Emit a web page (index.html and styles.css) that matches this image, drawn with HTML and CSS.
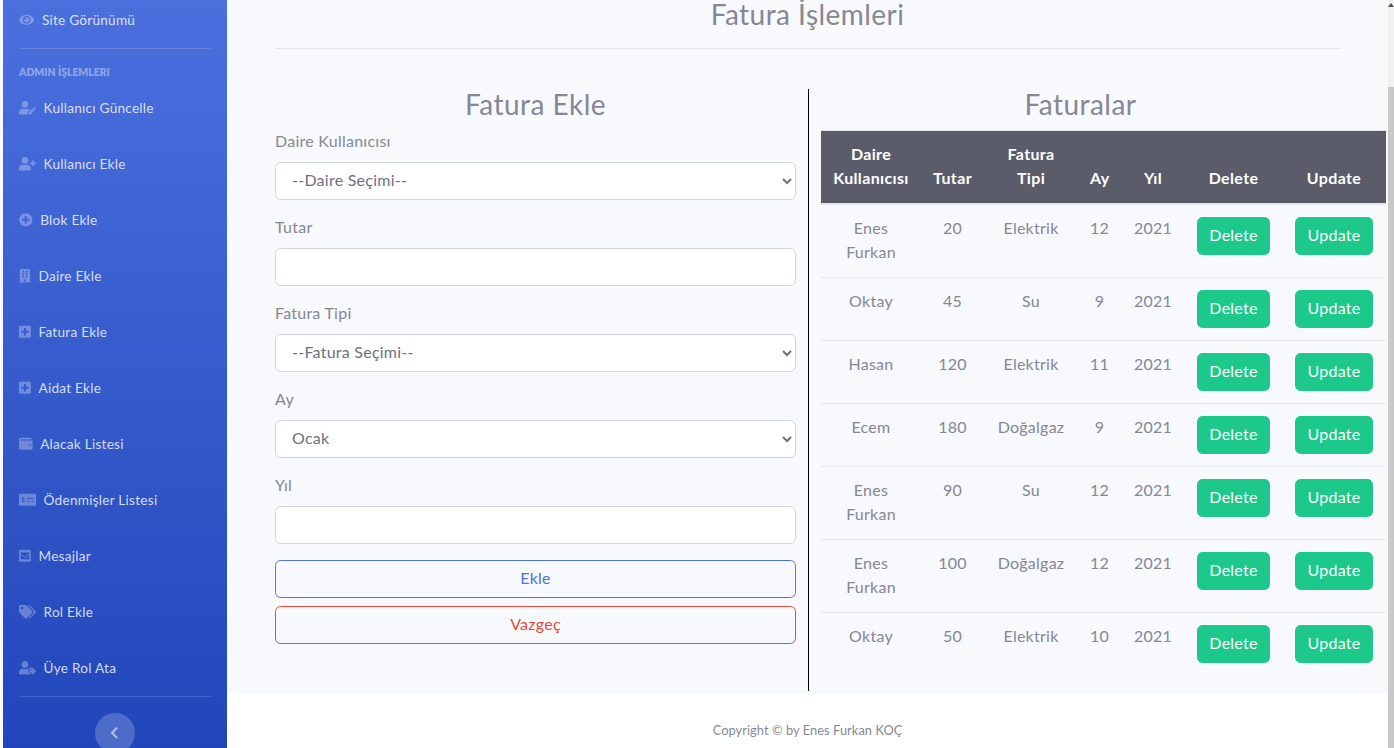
FILE: index.html
```html
<!DOCTYPE html>
<html lang="tr">
<head>
    <meta charset="UTF-8">
    <meta name="viewport" content="width=device-width, initial-scale=1.0">
    <title>Fatura İşlemleri</title>
    <link rel="stylesheet" href="styles.css">
</head>
<body>
    <div class="edge"></div>
    <nav class="sidebar">
        <a class="nav-top" href="#">
            <svg class="icon" viewBox="0 0 576 512"><path d="M572.52 241.4C518.29 135.59 410.93 64 288 64S57.68 135.64 3.48 241.41a32.35 32.35 0 0 0 0 29.19C57.71 376.41 165.07 448 288 448s230.32-71.64 284.52-177.41a32.35 32.35 0 0 0 0-29.19zM288 400a144 144 0 1 1 144-144 143.93 143.93 0 0 1-144 144zm0-240a95.31 95.31 0 0 0-25.31 3.79 47.85 47.85 0 0 1-66.9 66.9A95.78 95.78 0 1 0 288 160z"/></svg>
            <span>Site Görünümü</span>
        </a>
        <div class="side-divider"></div>
        <div class="side-heading">ADMIN İŞLEMLERI</div>
        <a class="nav-item" href="#">
            <svg class="icon" viewBox="0 0 640 512"><path d="M224 256c70.7 0 128-57.3 128-128S294.7 0 224 0 96 57.3 96 128s57.3 128 128 128zm89.6 32h-16.7c-22.2 10.2-46.9 16-72.9 16s-50.6-5.8-72.9-16h-16.7C60.2 288 0 348.2 0 422.4V464c0 26.5 21.5 48 48 48h274.9c-2.4-6.8-3.4-14-2.6-21.3l6.8-60.9 1.2-11.1 7.9-7.9 77.3-77.3c-24.5-27.7-60-45.5-99.9-45.5zm45.3 145.3l-6.8 61c-1.1 10.2 7.5 18.8 17.6 17.6l60.9-6.8 137.9-137.9-71.7-71.7-138 137.8zM633 268.9L595.1 231c-9.3-9.3-24.5-9.3-33.8 0l-37.8 37.8-4.1 4.1 71.8 71.7 41.8-41.8c9.3-9.4 9.3-24.5 0-33.9z"/></svg>
            <span>Kullanıcı Güncelle</span>
        </a>
        <a class="nav-item" href="#">
            <svg class="icon" viewBox="0 0 640 512"><path d="M624 208h-64v-64c0-8.8-7.2-16-16-16h-32c-8.8 0-16 7.2-16 16v64h-64c-8.8 0-16 7.2-16 16v32c0 8.8 7.2 16 16 16h64v64c0 8.8 7.2 16 16 16h32c8.8 0 16-7.2 16-16v-64h64c8.8 0 16-7.2 16-16v-32c0-8.8-7.2-16-16-16zm-400 48c70.7 0 128-57.3 128-128S294.7 0 224 0 96 57.3 96 128s57.3 128 128 128zm89.6 32h-16.7c-22.2 10.2-46.9 16-72.9 16s-50.6-5.8-72.9-16h-16.7C60.2 288 0 348.2 0 422.4V464c0 26.5 21.5 48 48 48h352c26.5 0 48-21.5 48-48v-41.6c0-74.2-60.2-134.4-134.4-134.4z"/></svg>
            <span>Kullanıcı Ekle</span>
        </a>
        <a class="nav-item" href="#">
            <svg class="icon" viewBox="0 0 512 512"><path d="M256 8C119 8 8 119 8 256s111 248 248 248 248-111 248-248S393 8 256 8zm144 276c0 6.6-5.4 12-12 12h-92v92c0 6.6-5.4 12-12 12h-56c-6.6 0-12-5.4-12-12v-92h-92c-6.6 0-12-5.4-12-12v-56c0-6.6 5.4-12 12-12h92v-92c0-6.6 5.4-12 12-12h56c6.6 0 12 5.4 12 12v92h92c6.6 0 12 5.4 12 12v56z"/></svg>
            <span>Blok Ekle</span>
        </a>
        <a class="nav-item" href="#">
            <svg class="icon" viewBox="0 0 448 512"><path d="M436 480h-20V24c0-13.3-10.7-24-24-24H56C42.7 0 32 10.7 32 24v456H12c-6.6 0-12 5.4-12 12v20h448v-20c0-6.6-5.4-12-12-12zM128 76c0-6.6 5.4-12 12-12h40c6.6 0 12 5.4 12 12v40c0 6.6-5.4 12-12 12h-40c-6.6 0-12-5.4-12-12V76zm0 96c0-6.6 5.4-12 12-12h40c6.6 0 12 5.4 12 12v40c0 6.6-5.4 12-12 12h-40c-6.6 0-12-5.4-12-12v-40zm52 148h-40c-6.6 0-12-5.4-12-12v-40c0-6.6 5.4-12 12-12h40c6.6 0 12 5.4 12 12v40c0 6.6-5.4 12-12 12zm76 160h-64v-84c0-6.6 5.4-12 12-12h40c6.6 0 12 5.4 12 12v84zm64-172c0 6.6-5.4 12-12 12h-40c-6.6 0-12-5.4-12-12v-40c0-6.6 5.4-12 12-12h40c6.6 0 12 5.4 12 12v40zm0-96c0 6.6-5.4 12-12 12h-40c-6.6 0-12-5.4-12-12v-40c0-6.6 5.4-12 12-12h40c6.6 0 12 5.4 12 12v40zm0-96c0 6.6-5.4 12-12 12h-40c-6.6 0-12-5.4-12-12V76c0-6.6 5.4-12 12-12h40c6.6 0 12 5.4 12 12v40z"/></svg>
            <span>Daire Ekle</span>
        </a>
        <a class="nav-item" href="#">
            <svg class="icon" viewBox="0 0 448 512"><path d="M400 32H48C21.5 32 0 53.5 0 80v352c0 26.5 21.5 48 48 48h352c26.5 0 48-21.5 48-48V80c0-26.5-21.5-48-48-48zm-32 252c0 6.6-5.4 12-12 12h-92v92c0 6.6-5.4 12-12 12h-56c-6.6 0-12-5.4-12-12v-92H92c-6.6 0-12-5.4-12-12v-56c0-6.6 5.4-12 12-12h92v-92c0-6.6 5.4-12 12-12h56c6.6 0 12 5.4 12 12v92h92c6.6 0 12 5.4 12 12v56z"/></svg>
            <span>Fatura Ekle</span>
        </a>
        <a class="nav-item" href="#">
            <svg class="icon" viewBox="0 0 448 512"><path d="M400 32H48C21.5 32 0 53.5 0 80v352c0 26.5 21.5 48 48 48h352c26.5 0 48-21.5 48-48V80c0-26.5-21.5-48-48-48zm-32 252c0 6.6-5.4 12-12 12h-92v92c0 6.6-5.4 12-12 12h-56c-6.6 0-12-5.4-12-12v-92H92c-6.6 0-12-5.4-12-12v-56c0-6.6 5.4-12 12-12h92v-92c0-6.6 5.4-12 12-12h56c6.6 0 12 5.4 12 12v92h92c6.6 0 12 5.4 12 12v56z"/></svg>
            <span>Aidat Ekle</span>
        </a>
        <a class="nav-item" href="#">
            <svg class="icon" viewBox="0 0 512 512"><path d="M461.2 128H80c-8.84 0-16-7.16-16-16s7.16-16 16-16h384c8.84 0 16-7.16 16-16 0-26.51-21.49-48-48-48H64C28.65 32 0 60.65 0 96v320c0 35.35 28.65 64 64 64h397.2c28.02 0 50.8-21.53 50.8-48V176c0-26.47-22.78-48-50.8-48zM416 336c-17.67 0-32-14.33-32-32s14.33-32 32-32 32 14.33 32 32-14.33 32-32 32z"/></svg>
            <span>Alacak Listesi</span>
        </a>
        <a class="nav-item" href="#">
            <svg class="icon" viewBox="0 0 640 512"><path d="M608 32H32C14.33 32 0 46.33 0 64v384c0 17.67 14.33 32 32 32h576c17.67 0 32-14.33 32-32V64c0-17.67-14.33-32-32-32zM176 327.88V344c0 4.42-3.58 8-8 8h-16c-4.42 0-8-3.58-8-8v-16.29c-11.29-.58-22.27-4.52-31.37-11.35-3.9-2.93-4.1-8.77-.57-12.14l11.75-11.21c2.77-2.64 6.89-2.76 10.13-.73 3.87 2.42 8.26 3.72 12.82 3.72h28.11c6.5 0 11.8-5.92 11.8-13.19 0-5.95-3.61-11.19-8.77-12.73l-45-13.5c-18.59-5.58-31.58-23.42-31.58-43.39 0-24.52 19.05-44.44 42.67-45.07V152c0-4.42 3.58-8 8-8h16c4.42 0 8 3.58 8 8v16.29c11.29.58 22.27 4.51 31.37 11.35 3.9 2.93 4.1 8.77.57 12.14l-11.75 11.21c-2.77 2.64-6.89 2.76-10.13.73-3.87-2.43-8.26-3.72-12.82-3.72h-28.11c-6.5 0-11.8 5.92-11.8 13.19 0 5.95 3.61 11.19 8.77 12.73l45 13.5c18.59 5.58 31.58 23.42 31.58 43.39 0 24.53-19.05 44.44-42.67 45.07zM416 312c0 4.42-3.58 8-8 8H296c-4.42 0-8-3.58-8-8v-16c0-4.42 3.58-8 8-8h112c4.42 0 8 3.58 8 8v16zm160 0c0 4.42-3.58 8-8 8h-80c-4.42 0-8-3.58-8-8v-16c0-4.42 3.58-8 8-8h80c4.42 0 8 3.58 8 8v16zm0-96c0 4.42-3.58 8-8 8H296c-4.42 0-8-3.58-8-8v-16c0-4.42 3.58-8 8-8h272c4.42 0 8 3.58 8 8v16z"/></svg>
            <span>Ödenmişler Listesi</span>
        </a>
        <a class="nav-item" href="#">
            <svg class="icon" viewBox="0 0 448 512"><path d="M400 32H48C21.49 32 0 53.49 0 80v352c0 26.51 21.49 48 48 48h352c26.51 0 48-21.49 48-48V80c0-26.51-21.49-48-48-48zM178.117 262.104C87.429 196.287 88.353 196.121 64 177.167V152c0-13.255 10.745-24 24-24h272c13.255 0 24 10.745 24 24v25.167c-24.371 18.969-23.434 19.124-114.117 84.938-10.5 7.655-31.392 26.12-45.883 25.894-14.503.218-35.367-18.227-45.883-25.895zM384 217.775V360c0 13.255-10.745 24-24 24H88c-13.255 0-24-10.745-24-24V217.775c13.958 10.794 33.329 25.236 95.303 70.214 14.162 10.341 37.975 32.145 64.694 32.01 26.887.134 51.037-22.041 64.72-32.025 61.958-44.965 81.325-59.406 95.283-70.199z"/></svg>
            <span>Mesajlar</span>
        </a>
        <a class="nav-item" href="#">
            <svg class="icon" viewBox="0 0 640 512"><path d="M497.941 225.941L286.059 14.059A48 48 0 0 0 252.118 0H48C21.49 0 0 21.49 0 48v204.118a48 48 0 0 0 14.059 33.941l211.882 211.882c18.744 18.745 49.136 18.746 67.882 0l204.118-204.118c18.745-18.745 18.745-49.137 0-67.882zM112 160c-26.51 0-48-21.49-48-48s21.49-48 48-48 48 21.49 48 48-21.49 48-48 48zm513.941 133.823L421.823 497.941c-18.745 18.745-49.137 18.745-67.882 0l-.36-.36L527.64 323.522c16.999-16.999 26.36-39.6 26.36-63.64s-9.362-46.641-26.36-63.64L331.397 0h48.721a48 48 0 0 1 33.941 14.059l211.882 211.882c18.745 18.745 18.745 49.137 0 67.882z"/></svg>
            <span>Rol Ekle</span>
        </a>
        <a class="nav-item" href="#">
            <svg class="icon" viewBox="0 0 640 512"><path d="M630.6 364.9l-90.3-90.2c-12-12-28.3-18.7-45.3-18.7h-79.3c-17.7 0-32 14.3-32 32v79.2c0 17 6.7 33.2 18.7 45.2l90.3 90.2c12.5 12.5 32.8 12.5 45.3 0l92.5-92.5c12.6-12.5 12.6-32.7.1-45.2zm-182.8-21c-13.3 0-24-10.7-24-24s10.7-24 24-24 24 10.7 24 24c0 13.2-10.7 24-24 24zm-223.8-88c70.7 0 128-57.3 128-128C352 57.3 294.7 0 224 0S96 57.3 96 128c0 70.6 57.3 128 128 127.9zm127.8 111.2V294c-12.2-3.6-24.9-6.2-38.2-6.2h-16.7c-22.2 10.2-46.9 16-72.9 16s-50.6-5.8-72.9-16h-16.7C60.2 287.9 0 348.1 0 422.3v41.6c0 26.5 21.5 48 48 48h352c15.5 0 29.1-7.5 37.9-18.9l-58-58c-18.1-18.1-28.1-42.2-28.1-67.9z"/></svg>
            <span>Üye Rol Ata</span>
        </a>
        <div class="side-divider side-divider-end"></div>
        <button class="side-toggle" type="button" aria-label="Menüyü daralt">
            <svg viewBox="0 0 320 512"><path d="M34.52 239.03L228.87 44.69c9.37-9.37 24.57-9.37 33.94 0l22.67 22.67c9.36 9.36 9.37 24.52.04 33.9L131.49 256l154.02 154.75c9.34 9.38 9.32 24.54-.04 33.9l-22.67 22.67c-9.37 9.37-24.57 9.37-33.94 0L34.52 272.97c-9.37-9.37-9.37-24.57 0-33.94z"/></svg>
        </button>
    </nav>

    <div class="main">
        <div class="content">
            <h3 class="page-title">Fatura İşlemleri</h3>
            <hr class="page-rule">
            <div class="columns">
                <form class="invoice-form">
                    <h3 class="section-title">Fatura Ekle</h3>
                    <label for="daire">Daire Kullanıcısı</label>
                    <select id="daire" class="field">
                        <option>--Daire Seçimi--</option>
                    </select>
                    <label for="tutar">Tutar</label>
                    <input id="tutar" class="field" type="text">
                    <label for="tip">Fatura Tipi</label>
                    <select id="tip" class="field">
                        <option>--Fatura Seçimi--</option>
                    </select>
                    <label for="ay">Ay</label>
                    <select id="ay" class="field">
                        <option>Ocak</option>
                    </select>
                    <label for="yil">Yıl</label>
                    <input id="yil" class="field" type="text">
                    <button class="btn-outline btn-blue" type="submit">Ekle</button>
                    <button class="btn-outline btn-red" type="button">Vazgeç</button>
                </form>
                <div class="invoice-list">
                    <h3 class="section-title">Faturalar</h3>
                    <table class="invoice-table">
                        <colgroup>
                            <col class="col-user"><col class="col-amount"><col class="col-type"><col class="col-month"><col class="col-year"><col class="col-delete"><col class="col-update">
                        </colgroup>
                        <thead>
                            <tr><th>Daire Kullanıcısı</th><th>Tutar</th><th>Fatura Tipi</th><th>Ay</th><th>Yıl</th><th>Delete</th><th>Update</th></tr>
                        </thead>
                        <tbody>
                            <tr><td>Enes Furkan</td><td>20</td><td>Elektrik</td><td>12</td><td>2021</td><td class="action"><a class="btn-green" href="#">Delete</a></td><td class="action"><a class="btn-green" href="#">Update</a></td></tr>
                            <tr><td>Oktay</td><td>45</td><td>Su</td><td>9</td><td>2021</td><td class="action"><a class="btn-green" href="#">Delete</a></td><td class="action"><a class="btn-green" href="#">Update</a></td></tr>
                            <tr><td>Hasan</td><td>120</td><td>Elektrik</td><td>11</td><td>2021</td><td class="action"><a class="btn-green" href="#">Delete</a></td><td class="action"><a class="btn-green" href="#">Update</a></td></tr>
                            <tr><td>Ecem</td><td>180</td><td>Doğalgaz</td><td>9</td><td>2021</td><td class="action"><a class="btn-green" href="#">Delete</a></td><td class="action"><a class="btn-green" href="#">Update</a></td></tr>
                            <tr><td>Enes Furkan</td><td>90</td><td>Su</td><td>12</td><td>2021</td><td class="action"><a class="btn-green" href="#">Delete</a></td><td class="action"><a class="btn-green" href="#">Update</a></td></tr>
                            <tr><td>Enes Furkan</td><td>100</td><td>Doğalgaz</td><td>12</td><td>2021</td><td class="action"><a class="btn-green" href="#">Delete</a></td><td class="action"><a class="btn-green" href="#">Update</a></td></tr>
                            <tr><td>Oktay</td><td>50</td><td>Elektrik</td><td>10</td><td>2021</td><td class="action"><a class="btn-green" href="#">Delete</a></td><td class="action"><a class="btn-green" href="#">Update</a></td></tr>
                        </tbody>
                    </table>
                </div>
            </div>
        </div>
        <footer class="footer">Copyright © by Enes Furkan KOÇ</footer>
    </div>

    <div class="scrollbar">
        <div class="scroll-arrow"></div>
        <div class="scroll-thumb"></div>
    </div>
</body>
</html>
```

FILE: styles.css
```css
* {
    box-sizing: border-box;
}
body {
    font-family: Lato, "Open Sans", sans-serif;
    font-size: 16px;
    line-height: 1.5;
    letter-spacing: 0.25px;
    color: #858796;
    background-color: #f8f9fc;
    display: flex;
    height: 100vh;
    margin: 0;
    overflow: hidden;
}
.edge {
    width: 3px;
    flex-shrink: 0;
}

/* sidebar */
.sidebar {
    width: 224px;
    flex-shrink: 0;
    display: flex;
    flex-direction: column;
    padding: 0 16px;
    background-image: linear-gradient(180deg, #4b70de 0%, #2046ba 100%);
    overflow: hidden;
}
.nav-top, .nav-item {
    display: flex;
    flex-shrink: 0;
    align-items: center;
    gap: 7.6px;
    color: rgba(255, 255, 255, 0.8);
    font-size: 13.6px;
    text-decoration: none;
}
.nav-top {
    height: 40px;
    margin-bottom: 8px;
}
.nav-item {
    height: 56px;
}
.icon {
    height: 13.6px;
    width: auto;
    flex-shrink: 0;
    fill: rgba(255, 255, 255, 0.3);
}
.side-divider {
    height: 1px;
    flex-shrink: 0;
    background-color: rgba(255, 255, 255, 0.15);
}
.side-heading {
    height: 16px;
    flex-shrink: 0;
    margin-top: 15px;
    color: rgba(255, 255, 255, 0.4);
    font-size: 10.4px;
    font-weight: 800;
    line-height: 16px;
    letter-spacing: 0;
}
.side-divider-end {
    margin-bottom: 16px;
}
.side-toggle {
    width: 40px;
    height: 40px;
    flex-shrink: 0;
    align-self: center;
    display: flex;
    align-items: center;
    justify-content: center;
    padding: 0;
    border: none;
    border-radius: 50%;
    background-color: rgba(255, 255, 255, 0.2);
}
.side-toggle svg {
    width: 8.5px;
    height: 13.6px;
    margin-right: 1px;
    fill: rgba(255, 255, 255, 0.55);
}

/* main */
.main {
    flex: 1;
    min-width: 0;
    display: flex;
    flex-direction: column;
}
.content {
    flex: 1;
    padding: 0 48px;
}
.page-title, .section-title {
    font-size: 28px;
    font-weight: 400;
    text-align: center;
    letter-spacing: 0.45px;
    margin: 0;
}
.page-title {
    line-height: 28px;
    padding-bottom: 2px;
}
.page-rule {
    height: 1px;
    margin: 18px 0 40px;
    border: none;
    background-color: #e3e6f0;
}
.section-title {
    line-height: 30px;
    margin-bottom: 11px;
}
.columns {
    display: flex;
}
.invoice-form {
    width: 534px;
    flex-shrink: 0;
    padding-right: 12px;
    border-right: 1px solid #000;
}
.invoice-form label {
    display: block;
    margin: -1px 0 9px;
}
.field {
    display: block;
    width: 100%;
    height: 38px;
    margin-bottom: 16px;
    padding: 4px 12px 8px;
    font-family: inherit;
    font-size: 16px;
    letter-spacing: inherit;
    color: #6e707e;
    background-color: #fff;
    border: 1px solid #d1d3e2;
    border-radius: 5.6px;
}
.btn-outline {
    display: block;
    width: 100%;
    height: 38px;
    margin-bottom: 8px;
    padding: 0 0 4px;
    font-family: inherit;
    font-size: 16px;
    letter-spacing: inherit;
    background: transparent;
    border: 1px solid;
    border-radius: 5.6px;
}
.btn-blue {
    color: #4e73df;
    border-color: #4e73df;
}
.btn-red {
    color: #e74a3b;
    border-color: #e74a3b;
}
.invoice-list {
    flex: 1;
    min-width: 0;
    padding-left: 12px;
}
.invoice-table {
    width: 565px;
    table-layout: fixed;
    border-collapse: collapse;
    margin-bottom: 16px;
    color: #858796;
}
.col-user { width: 100px; }
.col-amount { width: 63px; }
.col-type { width: 94px; }
.col-month { width: 43px; }
.col-year { width: 64px; }
.col-delete { width: 97px; }
.col-update { width: 104px; }
.invoice-table th, .invoice-table td {
    padding: 11px 12px 13px;
    text-align: center;
}
.invoice-table th {
    color: #fff;
    font-weight: 700;
    letter-spacing: 0.35px;
    background-color: #5a5c69;
    vertical-align: bottom;
    border-top: 1px solid #e3e6f0;
    border-bottom: 2px solid #e3e6f0;
}
.invoice-table td {
    vertical-align: top;
    border-top: 1px solid #e3e6f0;
}
.invoice-table td.action {
    padding: 12px 0;
}
.invoice-table tbody tr:first-child td {
    border-top: none;
}
.btn-green {
    display: inline-block;
    height: 38px;
    padding: 5px 0 7px;
    color: #fff;
    text-decoration: none;
    background-color: #1cc88a;
    border: 1px solid #1cc88a;
    border-radius: 5.6px;
}
.action .btn-green {
    width: 73px;
}
.action:last-child .btn-green {
    width: 78px;
}
.footer {
    height: 55px;
    padding-top: 28px;
    font-size: 12.8px;
    line-height: 18px;
    letter-spacing: 0.07px;
    text-align: center;
    background-color: #fff;
}

/* scrollbar */
.scrollbar {
    position: relative;
    width: 6px;
    flex-shrink: 0;
    background-color: #f1f1f1;
}
.scroll-arrow {
    width: 0;
    height: 0;
    margin: 3px auto 0;
    border-left: 3px solid transparent;
    border-right: 3px solid transparent;
    border-bottom: 4px solid #505050;
}
.scroll-thumb {
    position: absolute;
    top: 87px;
    bottom: 0;
    left: 0;
    right: 0;
    background-color: #c8c8c8;
}
```
